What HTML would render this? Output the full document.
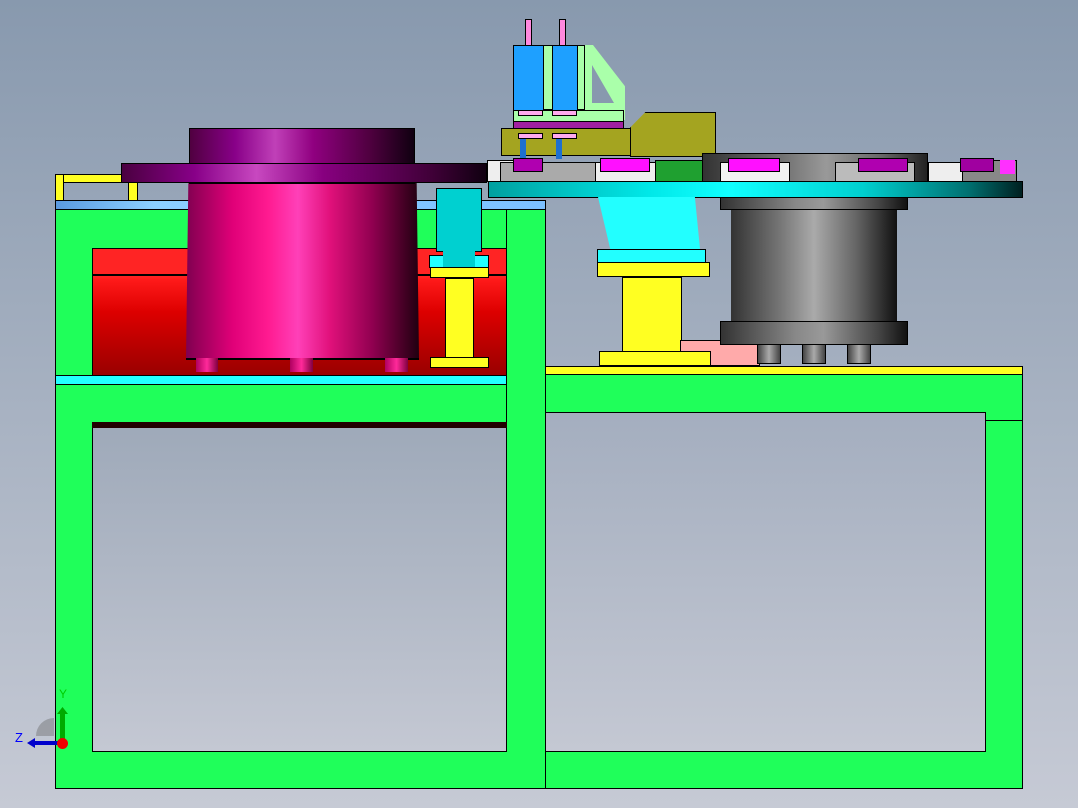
<!DOCTYPE html>
<html><head><meta charset="utf-8"><style>
body{margin:0;width:1078px;height:808px;overflow:hidden;background:linear-gradient(#8899ae,#c6cad5);position:relative;font-family:"Liberation Sans",sans-serif}
div{position:absolute;box-sizing:border-box}
.b{border:1px solid #000}
</style></head><body>
<div class="b" style="left:55px;top:209px;width:491px;height:580px;background:#1fff5a"></div>
<div class="b" style="left:545px;top:374px;width:478px;height:415px;background:#1fff5a"></div>
<div class="b" style="left:545px;top:366px;width:478px;height:9px;background:#ffff22"></div>
<div class="b" style="left:92px;top:248px;width:415px;height:128px;background:linear-gradient(#ff2424 0,#ff2424 22%,#ff1a1a 24%,#d00 50%,#900 100%)"></div>
<div class="b" style="left:92px;top:274px;width:415px;height:1px;background:#000"></div>
<div class="b" style="left:55px;top:375px;width:452px;height:10px;background:#22ffff"></div>
<div class="b" style="left:506px;top:209px;width:40px;height:580px;background:#1fff5a;border-bottom:none"></div>
<div class="b" style="left:92px;top:422px;width:415px;height:330px;background:linear-gradient(#9ea9b9,#c4c8d3)"></div>
<div style="left:92px;top:422px;width:415px;height:6px;background:#200"></div>
<div class="b" style="left:545px;top:412px;width:441px;height:340px;background:linear-gradient(#a4aebf,#c4c8d3)"></div>
<div class="b" style="left:985px;top:420px;width:38px;height:332px;background:#1fff5a"></div>
<div style="left:55px;top:751px;width:968px;height:38px;background:#1fff5a;border:1px solid #000;border-top:none"></div>
<div style="left:545px;top:751px;width:1px;height:38px;background:#000"></div>
<div style="left:92px;top:751px;width:415px;height:1px;background:#000"></div>
<div style="left:545px;top:751px;width:441px;height:1px;background:#000"></div>
<div class="b" style="left:55px;top:200px;width:491px;height:10px;background:linear-gradient(90deg,#5a9ae0,#8cd0ff 20%,#7cc0ff)"></div>
<div class="b" style="left:55px;top:174px;width:140px;height:9px;background:#ffff22"></div>
<div class="b" style="left:55px;top:174px;width:9px;height:27px;background:#ffff22"></div>
<div class="b" style="left:128px;top:182px;width:10px;height:19px;background:#ffff22"></div>
<div style="left:186px;top:183px;width:233px;height:176px;clip-path:polygon(1% 0,99% 0,100% 100%,0 100%);background:linear-gradient(90deg,#800050,#e00078 20%,#ff1a90 35%,#ff40b8 48%,#e0107a 62%,#900050 80%,#200010)"></div>
<div class="b" style="left:186px;top:358px;width:233px;height:1px"></div>
<div style="left:196px;top:358px;width:22px;height:14px;background:linear-gradient(90deg,#b00060,#ff2a9a,#800040)"></div>
<div style="left:290px;top:358px;width:23px;height:14px;background:linear-gradient(90deg,#b00060,#ff2a9a,#800040)"></div>
<div style="left:385px;top:358px;width:23px;height:14px;background:linear-gradient(90deg,#b00060,#ff2a9a,#800040)"></div>
<div class="b" style="left:189px;top:128px;width:226px;height:56px;background:linear-gradient(90deg,#500040,#880088 20%,#c040b8 38%,#900080 55%,#500040 80%,#100010)"></div>
<div class="b" style="left:121px;top:163px;width:366px;height:20px;background:linear-gradient(90deg,#4a0040,#880088 20%,#c848c0 37%,#880080 55%,#400038 85%,#100010)"></div>
<div class="b" style="left:436px;top:188px;width:46px;height:64px;background:#00d0d0"></div>
<div class="b" style="left:429px;top:255px;width:60px;height:13px;background:#22ffff"></div>
<div style="left:443px;top:250px;width:32px;height:18px;background:#00d0d0"></div>
<div class="b" style="left:430px;top:267px;width:59px;height:11px;background:#ffff22"></div>
<div class="b" style="left:445px;top:278px;width:29px;height:80px;background:#ffff22"></div>
<div class="b" style="left:430px;top:357px;width:59px;height:11px;background:#ffff22"></div>
<!-- cylinders -->
<div style="left:513px;top:45px;width:71px;height:66px;background:#1ea0ff;border:1px solid #000"></div>
<div class="b" style="left:543px;top:45px;width:10px;height:65px;background:#aaffaa"></div>
<div class="b" style="left:577px;top:45px;width:8px;height:65px;background:#aaffaa"></div>
<div style="left:585px;top:45px;width:40px;height:75px;background:#aaffaa;clip-path:polygon(0 0,20% 0,100% 55%,100% 100%,0 100%)"></div>
<div style="left:592px;top:65px;width:22px;height:38px;background:#8899ae;clip-path:polygon(0 0,100% 100%,0 100%)"></div>
<div class="b" style="left:513px;top:110px;width:111px;height:12px;background:#aaffaa"></div>
<div class="b" style="left:513px;top:121px;width:111px;height:8px;background:#a020a0"></div>
<div style="left:525px;top:19px;width:7px;height:27px;background:#ff88dd;border:1px solid #000"></div>
<div style="left:559px;top:19px;width:7px;height:27px;background:#ff88dd;border:1px solid #000"></div>
<div class="b" style="left:518px;top:110px;width:25px;height:6px;background:#ffaaee"></div>
<div class="b" style="left:552px;top:110px;width:25px;height:6px;background:#ffaaee"></div>
<div class="b" style="left:501px;top:128px;width:130px;height:28px;background:#a4a420"></div>
<div style="left:630px;top:112px;width:86px;height:45px;background:#a4a420;border:1px solid #000;clip-path:polygon(18% 0,100% 0,100% 100%,0 100%,0 35%)"></div>
<div class="b" style="left:518px;top:133px;width:25px;height:6px;background:#ffaaee"></div>
<div class="b" style="left:552px;top:133px;width:25px;height:6px;background:#ffaaee"></div>
<div style="left:520px;top:139px;width:6px;height:20px;background:#1e70d0"></div>
<div style="left:556px;top:139px;width:6px;height:20px;background:#1e70d0"></div>
<!-- parts on turntable -->
<div class="b" style="left:487px;top:160px;width:30px;height:22px;background:#eee"></div>
<div class="b" style="left:500px;top:162px;width:110px;height:20px;background:#aaa"></div>
<div class="b" style="left:595px;top:162px;width:70px;height:20px;background:#eee"></div>
<div class="b" style="left:655px;top:160px;width:50px;height:22px;background:#1fa030"></div>
<div class="b" style="left:702px;top:153px;width:226px;height:29px;background:linear-gradient(90deg,#333,#666 30%,#999 55%,#666 80%,#222)"></div>
<div class="b" style="left:720px;top:162px;width:70px;height:20px;background:#f2f2f2"></div>
<div class="b" style="left:835px;top:162px;width:80px;height:20px;background:#bbb"></div>
<div class="b" style="left:928px;top:162px;width:35px;height:20px;background:#eee"></div>
<div class="b" style="left:962px;top:160px;width:55px;height:22px;background:#888"></div>
<div class="b" style="left:513px;top:158px;width:30px;height:14px;background:#b000b0"></div>
<div class="b" style="left:600px;top:158px;width:50px;height:14px;background:#ff10ff"></div>
<div class="b" style="left:728px;top:158px;width:52px;height:14px;background:#ff10ff"></div>
<div class="b" style="left:858px;top:158px;width:50px;height:14px;background:#b000b0"></div>
<div class="b" style="left:960px;top:158px;width:34px;height:14px;background:#a000a0"></div>
<div style="left:1000px;top:160px;width:15px;height:14px;background:#ff30ff"></div>
<div class="b" style="left:488px;top:181px;width:535px;height:17px;background:linear-gradient(90deg,#00a0a0,#00e8e8 30%,#10ffff 45%,#00d0d0 70%,#007070 90%,#002020)"></div>
<div style="left:598px;top:197px;width:102px;height:52px;background:#22ffff;clip-path:polygon(0 0,95% 0,100% 100%,12% 100%)"></div>
<div class="b" style="left:597px;top:249px;width:109px;height:14px;background:#22ffff"></div>
<div class="b" style="left:597px;top:262px;width:113px;height:15px;background:#ffff22"></div>
<div class="b" style="left:622px;top:277px;width:60px;height:75px;background:#ffff22"></div>
<div style="left:680px;top:340px;width:80px;height:26px;background:#ffaaaa;border:1px solid #000"></div>
<div class="b" style="left:599px;top:351px;width:112px;height:15px;background:#ffff22"></div>
<div style="left:731px;top:208px;width:166px;height:115px;background:linear-gradient(90deg,#333,#777 30%,#aaa 50%,#666 75%,#111)"></div>
<div class="b" style="left:720px;top:197px;width:188px;height:13px;background:linear-gradient(90deg,#333,#888 40%,#999 55%,#444 85%,#111)"></div>
<div class="b" style="left:720px;top:321px;width:188px;height:24px;background:linear-gradient(90deg,#333,#888 40%,#999 55%,#444 85%,#111)"></div>
<div style="left:757px;top:344px;width:24px;height:20px;background:linear-gradient(90deg,#444,#aaa,#444);border:1px solid #000"></div>
<div style="left:802px;top:344px;width:24px;height:20px;background:linear-gradient(90deg,#444,#aaa,#444);border:1px solid #000"></div>
<div style="left:847px;top:344px;width:24px;height:20px;background:linear-gradient(90deg,#444,#aaa,#444);border:1px solid #000"></div>
<div style="left:36px;top:718px;width:36px;height:36px;border-radius:50%;background:rgba(100,100,100,.4);clip-path:inset(0 50% 50% 0)"></div>
<div style="left:60px;top:712px;width:5px;height:30px;background:#0a0"></div>
<div style="left:57px;top:707px;width:11px;height:7px;background:#0a0;clip-path:polygon(50% 0,100% 100%,0 100%)"></div>
<div style="left:33px;top:741px;width:28px;height:4px;background:#00c"></div>
<div style="left:27px;top:738px;width:8px;height:10px;background:#00c;clip-path:polygon(0 50%,100% 0,100% 100%)"></div>
<div style="left:57px;top:738px;width:11px;height:11px;border-radius:50%;background:#e00"></div>
<div style="left:59px;top:687px;font-size:12px;color:#0c0">Y</div>
<div style="left:15px;top:730px;font-size:13px;color:#00f">Z</div>
</body></html>
